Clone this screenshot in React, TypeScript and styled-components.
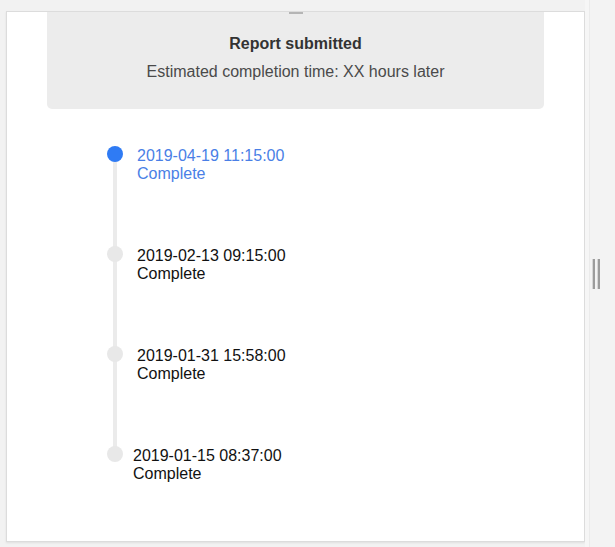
import React from "react";
import styled, { createGlobalStyle } from "styled-components";

const Global = createGlobalStyle`
  html, body { margin: 0; padding: 0; }
  body {
    background: #f2f2f2;
    font-family: "Liberation Sans", Arial, sans-serif;
    width: 615px;
    height: 547px;
    overflow: hidden;
  }
`;

const Page = styled.div`
  display: flex;
  flex-direction: row;
  align-items: stretch;
  height: 547px;
  padding: 11px 0 4px 6px;
  box-sizing: border-box;
`;

const Card = styled.div`
  width: 579px;
  height: 531px;
  box-sizing: border-box;
  background: #fff;
  border: 1px solid #dcdcdc;
  box-shadow: 0 1px 2px rgba(0, 0, 0, 0.08);
  overflow: hidden;
  display: flex;
  flex-direction: column;
`;

const Side = styled.div`
  flex: 1;
  display: flex;
  align-items: center;
  justify-content: flex-start;
  padding-left: 6px;
  margin-top: -11px;
  margin-bottom: -4px;
  background: linear-gradient(to right, #f6f6f6 0, #f6f6f6 4px, #ebebeb 4px, #ebebeb 5px, #f3f3f3 5px);
`;

const Handle = styled.div`
  display: flex;
  gap: 2px;
  height: 30px;
  margin-left: 1px;
`;

const HandleBar = styled.div`
  width: 3px;
  height: 100%;
  background: #9c9c9c;
  border-left: 1px solid #d6d6d6;
  box-sizing: border-box;
`;

const Notice = styled.div`
  flex: none;
  margin: 0 40px 0 40px;
  height: 97px;
  background: #ececec;
  border-radius: 0 0 5px 5px;
  display: flex;
  flex-direction: column;
  align-items: center;
  color: #333;
  box-sizing: border-box;
`;

const Dash = styled.div`
  width: 14px;
  height: 2px;
  background: #b5b5b5;
  margin-bottom: 20px;
`;

const Title = styled.div`
  font-size: 16px;
  font-weight: bold;
  line-height: 20px;
  color: #333;
`;

const Subtitle = styled.div`
  margin-top: 8px;
  font-size: 16px;
  line-height: 20px;
  color: #4a4a4a;
`;

const Timeline = styled.div`
  flex: none;
  margin-top: 37px;
  padding-left: 100px;
  display: flex;
  flex-direction: column;
`;

const Item = styled.div`
  position: relative;
  display: flex;
  flex-direction: row;
  height: 100px;
`;

const Tail = styled.div`
  position: absolute;
  left: 6px;
  top: 8px;
  width: 4px;
  height: 100px;
  background: #ebebeb;
`;

const Dot = styled.div<{ $active?: boolean }>`
  position: relative;
  z-index: 1;
  width: 16px;
  height: 16px;
  border-radius: 50%;
  background: ${(p) => (p.$active ? "#2f7bf4" : "#e8e8e8")};
  flex: none;
`;

const Content = styled.div<{ $active?: boolean; $gap: number }>`
  margin-left: ${(p) => p.$gap}px;
  margin-top: 1px;
  font-size: 16px;
  line-height: 18px;
  color: ${(p) => (p.$active ? "#4a7fe6" : "#111")};
`;

const Line = styled.div`
  white-space: nowrap;
`;

const items = [
  { time: "2019-04-19 11:15:00", active: true, gap: 14 },
  { time: "2019-02-13 09:15:00", active: false, gap: 14 },
  { time: "2019-01-31 15:58:00", active: false, gap: 14 },
  { time: "2019-01-15 08:37:00", active: false, gap: 10 },
];

export default function App() {
  return (
    <>
      <Global />
      <Page>
        <Card>
          <Notice>
            <Dash />
            <Title>Report submitted</Title>
            <Subtitle>Estimated completion time: XX hours later</Subtitle>
          </Notice>
          <Timeline>
            {items.map((it, i) => (
              <Item key={it.time}>
                {i < items.length - 1 && <Tail />}
                <Dot $active={it.active} />
                <Content $active={it.active} $gap={it.gap}>
                  <Line>{it.time}</Line>
                  <Line>Complete</Line>
                </Content>
              </Item>
            ))}
          </Timeline>
        </Card>
        <Side>
          <Handle>
            <HandleBar />
            <HandleBar />
          </Handle>
        </Side>
      </Page>
    </>
  );
}
